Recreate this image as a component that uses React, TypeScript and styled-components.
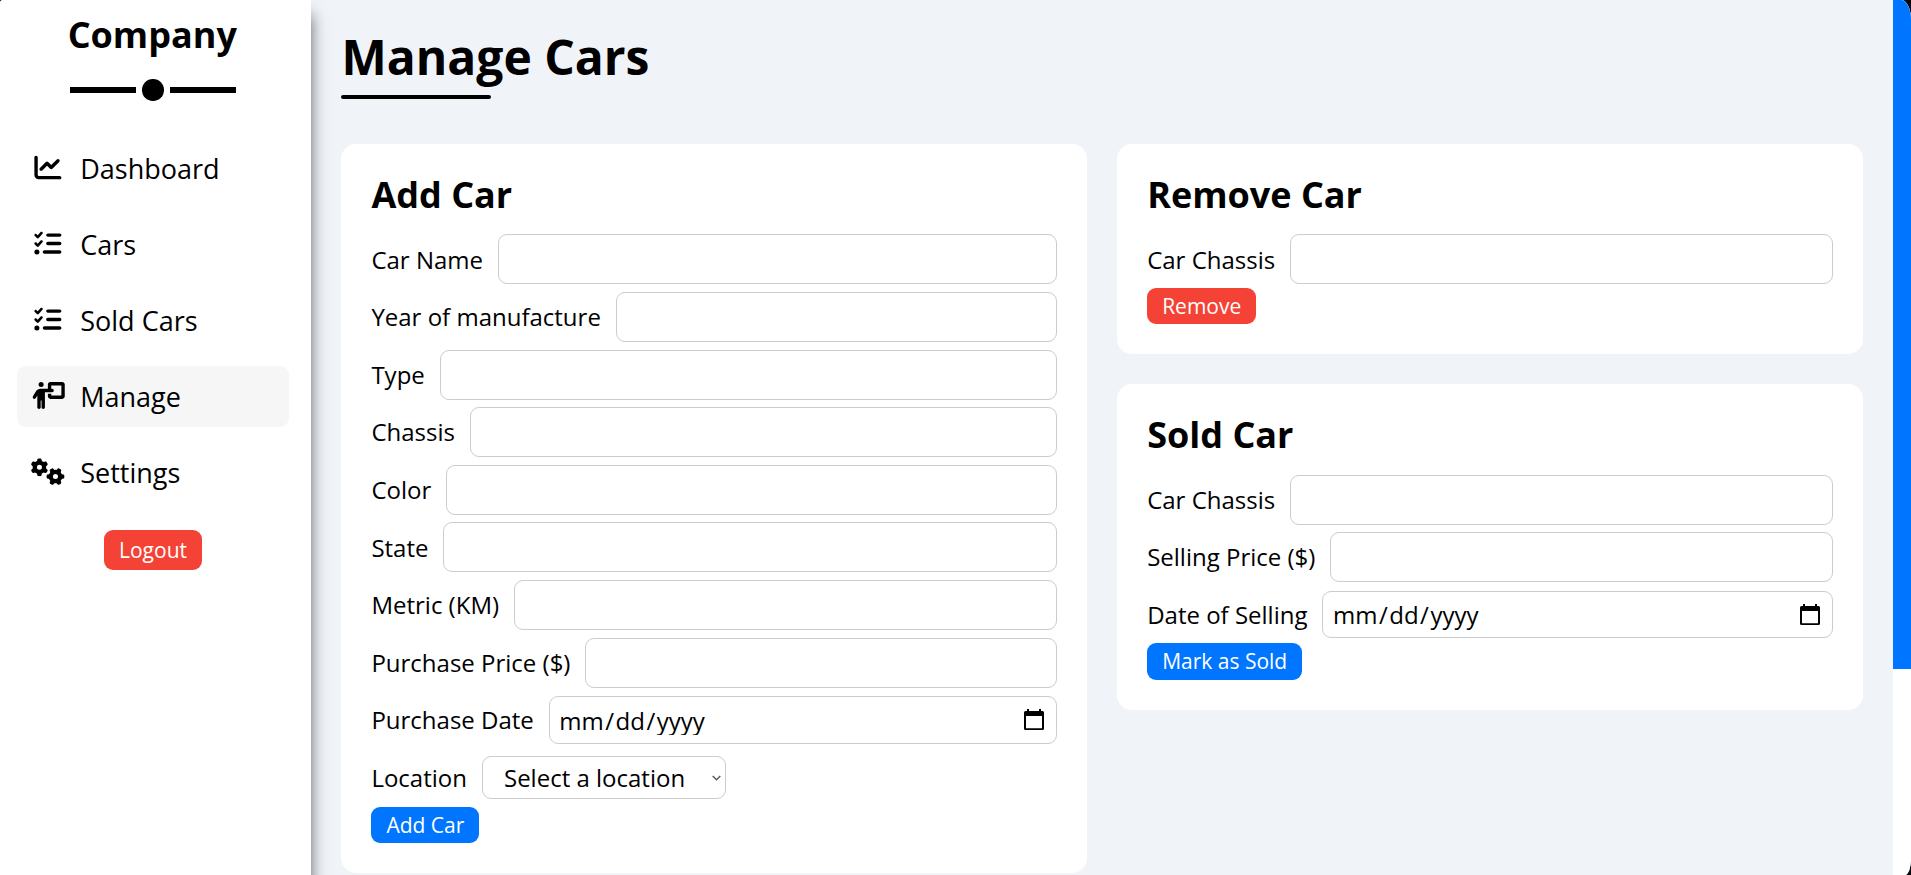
import React from "react";
import styled, { createGlobalStyle, css } from "styled-components";
import { FaChartLine, FaListCheck, FaPersonChalkboard, FaGears } from "react-icons/fa6";

const Global = createGlobalStyle`
  * { box-sizing: border-box; margin: 0; padding: 0; }
  body {
    font-family: "Open Sans", "Noto Sans", sans-serif;
    font-size: 24px;
    color: #000;
    background: #05070c;
    overflow: hidden;
  }
`;

const Page = styled.div`
  display: flex;
  width: 1911px;
  height: 875px;
  overflow: hidden;
  background: #f0f4f9;
  border-radius: 3px 10px 6px 0 / 3px 20px 16px 0;
`;

const Sidebar = styled.aside`
  display: flex;
  flex-direction: column;
  align-items: center;
  width: 311px;
  flex: none;
  padding: 10px 22px 0 17px;
  background: #fff;
  box-shadow: 0 15px 15px rgba(0, 0, 0, 0.6);
`;

const Brand = styled.h2`
  padding-right: 1.5px;
  font-size: 36px;
  line-height: 49px;
  font-weight: 700;
`;

const Divider = styled.div`
  display: flex;
  align-items: center;
  gap: 6.5px;
  height: 22px;
  margin-top: 20px;
`;

const Line = styled.span`
  width: 65.5px;
  height: 6px;
  background: #000;
`;

const Dot = styled.span`
  width: 21.5px;
  height: 21.5px;
  border-radius: 50%;
  background: #000;
`;

const Nav = styled.nav`
  display: flex;
  flex-direction: column;
  gap: 15px;
  width: 100%;
  margin-top: 37px;
`;

const NavItem = styled.a<{ $active?: boolean }>`
  display: flex;
  align-items: center;
  height: 61px;
  padding: 0 14.2px;
  border-radius: 9px;
  font-size: 27px;
  background: ${(p) => (p.$active ? "#f6f6f6" : "transparent")};
`;

const IconBox = styled.span`
  flex: none;
  width: 33.75px;
  margin: 0 15.3px 1.5px 0;
  svg {
    display: block;
    width: 33.75px;
    height: 27px;
  }
`;

const Button = styled.button<{ $tone: "red" | "blue"; $height?: number }>`
  align-self: flex-start;
  height: ${(p) => p.$height ?? 36.1}px;
  padding: 0 15px;
  border: 0;
  border-radius: 9px;
  font-family: inherit;
  font-size: 21px;
  line-height: 28px;
  color: #fff;
  background: ${(p) => (p.$tone === "red" ? "#f44336" : "#0075ff")};
`;

const Logout = styled(Button)`
  align-self: center;
  margin-top: 27px;
`;

const Main = styled.main`
  flex: 1;
  padding: 0 30px;
`;

const Title = styled.h1`
  width: fit-content;
  margin-top: 24px;
  padding-left: 0.5px;
  font-size: 48px;
  line-height: 65px;
  font-weight: 700;
`;

const Underline = styled.div`
  width: 150px;
  height: 4px;
  margin-top: 6px;
  border-radius: 3px;
  background: #000;
`;

const Columns = styled.div`
  display: grid;
  grid-template-columns: 1fr 1fr;
  align-items: start;
  gap: 30px;
  margin-top: 45px;
`;

const Card = styled.section`
  display: flex;
  flex-direction: column;
  padding: 26px 30px 30px 30.4px;
  border-radius: 15px;
  background: #fff;
`;

const Stack = styled.div`
  display: flex;
  flex-direction: column;
  gap: 30px;
  ${Card} {
    padding-left: 30.15px;
  }
`;

const CardTitle = styled.h2`
  height: 60.6px;
  font-size: 36px;
  line-height: 49px;
  font-weight: 700;
`;

const Row = styled.label<{ $height?: number }>`
  display: flex;
  align-items: center;
  gap: 15px;
  height: ${(p) => p.$height ?? 57.6}px;
  line-height: 33px;
  white-space: nowrap;
`;

const LabelText = styled.span`
  margin-bottom: 0.6px;
`;

const field = css`
  border: 1px solid #ccc;
  border-radius: 9px;
  background: #fff;
  font-family: inherit;
  font-size: 24px;
`;

const TextInput = styled.input`
  ${field}
  flex: 1;
  min-width: 0;
  height: 50px;
  padding: 0 9px;
  outline: none;
`;

const DateBox = styled.div`
  ${field}
  display: flex;
  flex: 1;
  align-items: center;
  justify-content: space-between;
  height: 47.4px;
  padding: 0 12px 0 9.5px;
`;

const DateText = styled.span<{ $clip?: boolean }>`
  height: ${(p) => (p.$clip ? 30.5 : 33)}px;
  margin-bottom: ${(p) => (p.$clip ? 1 : 0)}px;
  overflow: hidden;
`;

const Slash = styled.span`
  padding: 0 1.5px;
`;

const SelectBox = styled.div`
  ${field}
  display: flex;
  align-items: center;
  justify-content: space-between;
  width: 244px;
  height: 43px;
  padding: 0 4px 0 21px;
`;

const Calendar = styled.svg`
  margin-bottom: 1px;
`;

const CalendarIcon = () => (
  <Calendar width="20" height="21" viewBox="0 0 20 21">
    <path
      fillRule="evenodd"
      d="M3 0h2v2h10V0h2v2h1.500a1.500 1.500 0 0 1 1.500 1.500V19.500a1.500 1.500 0 0 1-1.500 1.500h-17A1.500 1.500 0 0 1 0 19.500V3.500A1.500 1.500 0 0 1 1.500 2H3zM2 7v12.300h16V7z"
    />
  </Calendar>
);

const Chevron = () => (
  <svg width="9" height="6" viewBox="0 0 9 6">
    <path d="M.7 1l3.800 3.700L8.300 1" fill="none" stroke="#5c5c5c" strokeWidth="1.500" />
  </svg>
);

const ScrollTrack = styled.div`
  flex: none;
  width: 18px;
  background: #fff;
`;

const ScrollThumb = styled.div`
  height: 669px;
  background: #0075ff;
`;

const navItems = [
  { label: "Dashboard", Icon: FaChartLine },
  { label: "Cars", Icon: FaListCheck },
  { label: "Sold Cars", Icon: FaListCheck },
  { label: "Manage", Icon: FaPersonChalkboard, active: true },
  { label: "Settings", Icon: FaGears },
];

const carFields = [
  "Car Name",
  "Year of manufacture",
  "Type",
  "Chassis",
  "Color",
  "State",
  "Metric (KM)",
  "Purchase Price ($)",
];

const TextField = ({ label }: { label: string }) => (
  <Row>
    <LabelText>{label}</LabelText>
    <TextInput />
  </Row>
);

const DateField = ({ label, clip, height }: { label: string; clip?: boolean; height?: number }) => (
  <Row $height={height}>
    <LabelText>{label}</LabelText>
    <DateBox>
      <DateText $clip={clip}>
        mm<Slash>/</Slash>dd<Slash>/</Slash>yyyy
      </DateText>
      <CalendarIcon />
    </DateBox>
  </Row>
);

export default function App() {
  return (
    <Page>
      <Global />
      <Sidebar>
        <Brand>Company</Brand>
        <Divider>
          <Line />
          <Dot />
          <Line />
        </Divider>
        <Nav>
          {navItems.map(({ label, Icon, active }) => (
            <NavItem key={label} $active={active}>
              <IconBox>
                <Icon />
              </IconBox>
              {label}
            </NavItem>
          ))}
        </Nav>
        <Logout $tone="red" $height={40}>
          Logout
        </Logout>
      </Sidebar>
      <Main>
        <Title>Manage Cars</Title>
        <Underline />
        <Columns>
          <Card>
            <CardTitle>Add Car</CardTitle>
            {carFields.map((label) => (
              <TextField key={label} label={label} />
            ))}
            <DateField label="Purchase Date" clip />
            <Row as="div">
              <LabelText>Location</LabelText>
              <SelectBox>
                Select a location
                <Chevron />
              </SelectBox>
            </Row>
            <Button $tone="blue">Add Car</Button>
          </Card>
          <Stack>
            <Card>
              <CardTitle>Remove Car</CardTitle>
              <TextField label="Car Chassis" />
              <Button $tone="red">Remove</Button>
            </Card>
            <Card>
              <CardTitle>Sold Car</CardTitle>
              <TextField label="Car Chassis" />
              <TextField label="Selling Price ($)" />
              <DateField label="Date of Selling" height={57} />
              <Button $tone="blue" $height={36.6}>
                Mark as Sold
              </Button>
            </Card>
          </Stack>
        </Columns>
      </Main>
      <ScrollTrack>
        <ScrollThumb />
      </ScrollTrack>
    </Page>
  );
}
